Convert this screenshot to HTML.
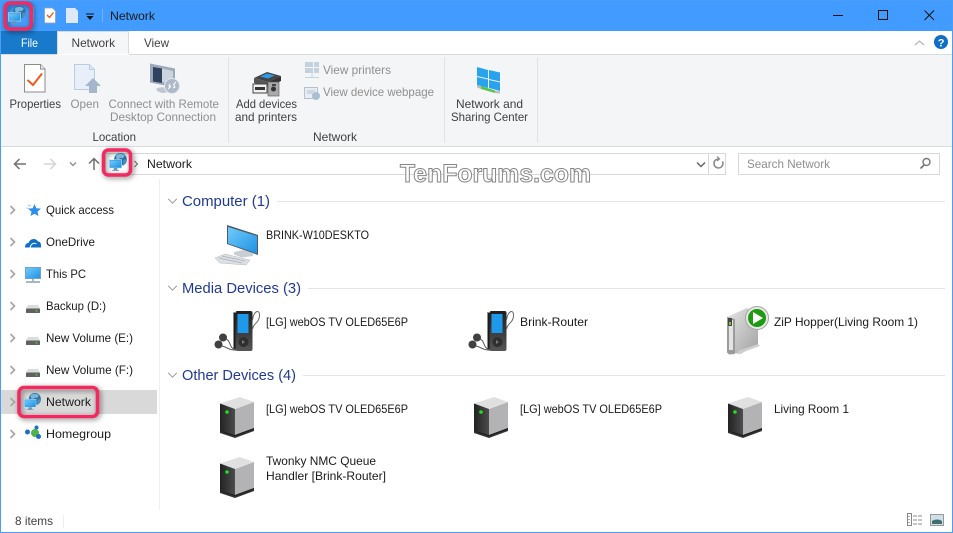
<!DOCTYPE html>
<html><head><meta charset="utf-8"><title>Network</title>
<style>
html,body{margin:0;padding:0;background:#fff;width:953px;height:533px;overflow:hidden}
svg{display:block}
text{font-family:"Liberation Sans",sans-serif;font-size:12px;fill:#1a1a1a}
.g{fill:#8f8f8f}.d{fill:#404040}.h{font-size:15px;fill:#203a94}
.wm{font-size:25px;font-weight:bold;fill:#fff;stroke:#858585;stroke-width:1px}
</style></head><body>
<svg width="953" height="533" viewBox="0 0 953 533" xmlns="http://www.w3.org/2000/svg">
<defs>
<filter id="sh" x="-40%" y="-40%" width="180%" height="180%"><feGaussianBlur stdDeviation="2.6"/></filter>
<linearGradient id="scr" x1="0" y1="0" x2="1" y2="1"><stop offset="0" stop-color="#74cbfa"/><stop offset="1" stop-color="#1c92e4"/></linearGradient>
<linearGradient id="tw" x1="0" y1="0" x2="1" y2="0"><stop offset="0" stop-color="#222"/><stop offset="1" stop-color="#4c4c4c"/></linearGradient>
<linearGradient id="rt" x1="0" y1="0" x2="1" y2="1"><stop offset="0" stop-color="#e6e6e6"/><stop offset="1" stop-color="#a2a2a2"/></linearGradient>
<linearGradient id="pl" x1="0" y1="0" x2="0" y2="1"><stop offset="0" stop-color="#1f1f1f"/><stop offset="1" stop-color="#555"/></linearGradient>
<symbol id="net" viewBox="0 0 24 24" overflow="visible">
<circle cx="14.500" cy="8" r="8" fill="#2e6f9e"/><path d="M9 3c3-2.500 8-2.500 11 .5l-3 3.500-2-1-3 2-3-1z" fill="#78b6dc"/><path d="M18 9l4.500-1.500c.5 4-1.500 7-5 8.500z" fill="#4a8fbd"/>
<rect x=".5" y="8.500" width="15.500" height="10.500" fill="#1f8fe4" stroke="#c5e6fa" stroke-width=".8"/>
<rect x="1.500" y="9.500" width="13.500" height="8.500" fill="url(#scr)"/>
<path d="M6.500 19.500h3.500v1.500H6.500zM4 22h8.500" fill="#5f8fae" stroke="#6f97b2" stroke-width="1"/>
</symbol>
<symbol id="tower" viewBox="0 0 34 41" overflow="visible">
<path d="M15 12L34 5v26l-19 7z" fill="#b3b3b5"/>
<path d="M0 6.500L20 0l14 5-19 7z" fill="#e0e0e0"/>
<path d="M0 6.500L15 12v26L0 33z" fill="url(#tw)"/>
<path d="M0 33l15 5 19-7v3l-19 7-15-5z" fill="#333"/>
<path d="M0 33l15 5 19-7v1.200l-19 7-15-5z" fill="#1d1d1d"/>
<circle cx="7" cy="15" r="1.800" fill="#1ee01e"/>
</symbol>
<symbol id="player" viewBox="0 0 46 46" overflow="visible">
<rect x="20.500" y="3" width="17" height="40" rx="2" fill="url(#pl)"/>
<path d="M20.500 5l-2-1v37l2 2z" fill="#1a1a1a"/>
<rect x="22.500" y="6" width="11" height="19" fill="#1f9aeb"/>
<circle cx="28.500" cy="34" r="5" fill="#2f2f2f"/><path d="M27 32l3 2-3 2z" fill="#777"/>
<path d="M37.500 12C39 2 45 1 44.500 8c-.5 7-6 7-7 13" fill="none" stroke="#666" stroke-width="1"/>
<path d="M10 31c6 0 4 10 10 10M7 38c5 1 6 4 13 4" fill="none" stroke="#555" stroke-width="1"/>
<circle cx="8" cy="29.500" r="4" fill="#404040"/><circle cx="3.500" cy="36.500" r="4" fill="#404040"/>
</symbol>
<symbol id="drive" viewBox="0 0 14 8" overflow="visible">
<path d="M2 0h10l2 3.500H0z" fill="#dcdcdc"/><rect y="3.500" width="14" height="4.500" rx=".8" fill="#606060"/><circle cx="10.500" cy="5.800" r="1" fill="#32d432"/>
</symbol>
<symbol id="chev" viewBox="0 0 8 10" overflow="visible"><path d="M1.500 1l4 4-4 4" fill="none" stroke="#a6a6a6" stroke-width="1.700"/></symbol>
<symbol id="dn" viewBox="0 0 12 7" overflow="visible"><path d="M1 1l5 5 5-5" fill="none" stroke="#8a8a8a" stroke-width="1"/></symbol>
</defs>

<rect width="953" height="533" fill="#fff"/>
<!-- title bar -->
<rect width="953" height="31" fill="#429cff"/>
<path d="M33.500 7v16" stroke="#6fb3fb"/>
<path d="M44.500 8h8l3 3v12h-11z" fill="#fdfdfd" stroke="#8aa3bd" stroke-width=".8"/><path d="M47 15l2.500 2.500 4-5" fill="none" stroke="#ea5a1f" stroke-width="1.400"/>
<path d="M66 8h9l3 3v12H66z" fill="#dfe8f6"/>
<path d="M86 14h8" stroke="#111" stroke-width="1"/><path d="M86.500 16h7l-3.500 4z" fill="#111"/>
<path d="M102.500 9v13" stroke="#6fb3fb"/>
<text x="110" y="20" textLength="45" lengthAdjust="spacingAndGlyphs">Network</text>
<path d="M833 15.500h10" stroke="#111" stroke-width="1"/>
<rect x="878.500" y="10.500" width="9" height="9" fill="none" stroke="#111"/>
<path d="M924.500 10.500l9.500 9.500M934 10.500L924.500 20" stroke="#111" fill="none"/>

<!-- tab row -->
<rect x="0" y="31" width="953" height="24" fill="#fff"/>
<rect x="1" y="31" width="56" height="24" fill="#1979ca"/>
<text x="21" y="47" textLength="17" lengthAdjust="spacingAndGlyphs" style="fill:#fff">File</text>
<path d="M57.500 54V31.500h71V54" fill="#f5f6f7" stroke="#dadbdc"/>
<text x="71.500" y="47" textLength="43.500" lengthAdjust="spacingAndGlyphs" class="d">Network</text>
<text x="144" y="47" textLength="25" lengthAdjust="spacingAndGlyphs" class="d">View</text>
<path d="M915 45l4.500-4 4.500 4" fill="none" stroke="#b5b5b5" stroke-width="1.200"/>
<circle cx="941" cy="42" r="7" fill="#0f6fc6"/><text x="937.800" y="46.500" style="font-size:11px;font-weight:bold;fill:#fff">?</text>

<!-- ribbon -->
<rect x="1" y="55" width="951" height="91" fill="#f4f5f7"/>
<path d="M129 54.500h824M0 54.500h57" stroke="#dadbdc"/>
<path d="M0 146.500h953" stroke="#dadbdc"/>
<path d="M228.500 57v86M444.500 57v86M537.500 57v86" stroke="#e1e2e4"/>

<!-- ribbon icons -->
<path d="M24.500 64.500h16l4.500 4.500v23h-20.500z" fill="#fff" stroke="#8c8c8c"/><path d="M40.500 64.500v4.500h4.500" fill="#eee" stroke="#8c8c8c"/>
<path d="M27.500 80l5.500 5 9-11.500" fill="none" stroke="#ed5b1e" stroke-width="2"/>
<path d="M74.500 64.500h15l5 5v20h-20z" fill="#e8eff9" stroke="#b9cbe5"/><path d="M89.500 64.500v5h5" fill="#dbe6f5" stroke="#b9cbe5"/>
<path d="M93 78l-8 8h4v7h8v-7h4z" fill="#a5b5cb"/>
<path d="M150 63.500l25 5v19l-25-5z" fill="#9ca9bb"/><path d="M153 67l9 1.500V83l-9-1.500z" fill="#2f4260"/><path d="M162 68.500l11 2.500v13l-11-2z" fill="#cbd3dd"/>
<path d="M156 89c4-3 12-2 12 1.500s-10 3.500-12-1.500z" fill="#c0c7d0"/>
<circle cx="172" cy="86" r="7.500" fill="#adb9c8" stroke="#e5e9ee"/><path d="M168 89l3-3M173 85l3-3M170 84l-1 2 2 1M173 88l2-1-1-2" fill="none" stroke="#fff"/>

<!-- add devices -->
<path d="M254 78l13-6 14 4-13 6z" fill="#444"/><path d="M260 76.500l7-3 8 2-7 3z" fill="#2f9be6"/>
<path d="M254 78l14 4v5l-14-4z" fill="#555"/><path d="M268 82l13-6v5l-13 6z" fill="#333"/>
<rect x="253" y="84" width="14" height="9" fill="#f1f1f1" stroke="#444"/><rect x="255" y="87" width="10" height="3" fill="#333"/>
<rect x="268" y="82" width="11" height="14" fill="#a9a9a9" stroke="#555" stroke-width=".6"/><circle cx="273.500" cy="89" r="2.500" fill="#333"/><rect x="272" y="84" width="4" height="2" fill="#444"/>

<!-- small grey ribbon icons -->
<g fill="#c4d1df"><rect x="305" y="62" width="8" height="5"/><rect x="314" y="62" width="5" height="5"/><rect x="305" y="68" width="8" height="5"/><rect x="314" y="68" width="5" height="5"/></g>
<path d="M312 73v4M305 77.500h14" stroke="#c4d1df"/>
<rect x="304.500" y="87.500" width="13" height="11" fill="#e8edf3" stroke="#b3c1d1"/><path d="M307 91h8M307 93h6" stroke="#b3c1d1"/>
<circle cx="316" cy="96" r="4" fill="#a9bdd3"/>

<!-- network and sharing -->
<path d="M477 67l11 3v8.500l-11-2.500z" fill="#2aa3ef"/><path d="M489 70l11 2.500v9l-11-2.500z" fill="#2aa3ef"/>
<path d="M477 77l11 2.500v8.500l-11-3z" fill="#2aa3ef"/><path d="M489 80l11 2.500v8.500l-11-3z" fill="#2aa3ef"/>
<path d="M481 86l14 4.500v2.500l-14-4z" fill="#5cc24a"/><path d="M495 90.500l5 1v2l-5-.5z" fill="#bbb"/><path d="M477 85l4 1v3l-4-1.500z" fill="#bbb"/>

<!-- ribbon text -->
<text x="9.500" y="108" textLength="51.500" lengthAdjust="spacingAndGlyphs" class="d">Properties</text>
<text x="70.500" y="108" textLength="28.500" lengthAdjust="spacingAndGlyphs" class="g">Open</text>
<text x="108.500" y="108" textLength="110.500" lengthAdjust="spacingAndGlyphs" class="g">Connect with Remote</text>
<text x="110" y="121" textLength="106" lengthAdjust="spacingAndGlyphs" class="g">Desktop Connection</text>
<text x="92.500" y="141" textLength="43.500" lengthAdjust="spacingAndGlyphs" class="d">Location</text>
<text x="236" y="108" textLength="61" lengthAdjust="spacingAndGlyphs" class="d">Add devices</text>
<text x="235" y="121" textLength="62" lengthAdjust="spacingAndGlyphs" class="d">and printers</text>
<text x="323" y="74" textLength="68" lengthAdjust="spacingAndGlyphs" class="g">View printers</text>
<text x="323" y="96" textLength="111" lengthAdjust="spacingAndGlyphs" class="g">View device webpage</text>
<text x="313" y="141" textLength="44" lengthAdjust="spacingAndGlyphs" class="d">Network</text>
<text x="456" y="108" textLength="67" lengthAdjust="spacingAndGlyphs" class="d">Network and</text>
<text x="451" y="121" textLength="77" lengthAdjust="spacingAndGlyphs" class="d">Sharing Center</text>

<!-- address row -->
<path d="M26 164H14.500M19.500 159l-5 5 5 5" fill="none" stroke="#707070" stroke-width="1.500"/>
<path d="M44 164h11.500M50.500 159l5 5-5 5" fill="none" stroke="#d5d5d5" stroke-width="1.500"/>
<path d="M70 162.500l3 3 3-3" fill="none" stroke="#8a8a8a" stroke-width="1.300"/>
<path d="M94 170v-11.500M89 163.500l5-5 5 5" fill="none" stroke="#707070" stroke-width="1.500"/>
<rect x="105.500" y="153.500" width="620" height="21" fill="#fff" stroke="#d9d9d9"/>
<path d="M708.500 154v20" stroke="#d9d9d9"/>
<path d="M697 162.500l4 4 4-4" fill="none" stroke="#666" stroke-width="1.500"/>
<path d="M722.500 161.500a4.500 4.500 0 1 1-3.500-2.500" fill="none" stroke="#888" stroke-width="1.500"/><path d="M717 156.500l2.500 2.500-2.500 2" fill="none" stroke="#888" stroke-width="1.200"/>
<path d="M134.500 161l3 3-3 3" fill="none" stroke="#777" stroke-width="1.200"/>
<text x="147" y="168" textLength="45" lengthAdjust="spacingAndGlyphs">Network</text>
<rect x="738.500" y="153.500" width="201" height="21" fill="#fff" stroke="#d9d9d9"/>
<text x="747" y="168" textLength="83" lengthAdjust="spacingAndGlyphs" class="g">Search Network</text>
<circle cx="926.500" cy="162" r="3.500" fill="none" stroke="#777" stroke-width="1.400"/><path d="M924 165l-3.500 3.500" stroke="#777" stroke-width="1.800"/>
<text x="400" y="182" textLength="191" lengthAdjust="spacingAndGlyphs" class="wm">TenForums.com</text>

<!-- sidebar -->
<path d="M159.500 179v331" stroke="#efefef"/>
<rect x="1" y="390" width="156" height="24" fill="#d9d9d9"/>
<use href="#chev" x="9" y="205" width="8" height="10"/>
<use href="#chev" x="9" y="237" width="8" height="10"/>
<use href="#chev" x="9" y="269" width="8" height="10"/>
<use href="#chev" x="9" y="301" width="8" height="10"/>
<use href="#chev" x="9" y="333" width="8" height="10"/>
<use href="#chev" x="9" y="365" width="8" height="10"/>
<use href="#chev" x="9" y="397" width="8" height="10"/>
<use href="#chev" x="9" y="429" width="8" height="10"/>
<path d="M34.500 204l1.800 4.200 4.700.4-3.500 3 1 4.400-4-2.300-4 2.300 1-4.400-3.500-3 4.700-.4z" fill="#2c8ee8"/>
<path d="M28 205l3 1M26.500 208l3 .5" stroke="#9dcaf2"/>
<path d="M25 247.500c0-3.500 2-4.500 3.500-4.500 1.500-4.500 7-5.500 9.500-1.500 2-.3 3.500 2 3 6z" fill="#0f6fc6"/>
<path d="M30 247.500c1-3 3-5.500 6.500-3.500" fill="none" stroke="#fff" stroke-width="1"/>
<rect x="25.500" y="267.500" width="15" height="11" fill="url(#scr)" stroke="#6ea3c8"/><path d="M33 279v2M26 282h14" stroke="#8a9fb0" stroke-width="1.500"/>
<use href="#drive" x="26" y="305" width="14" height="8"/>
<use href="#drive" x="26" y="337" width="14" height="8"/>
<use href="#drive" x="26" y="369" width="14" height="8"/>
<circle cx="27.500" cy="432" r="2.500" fill="#1d6fc4"/><circle cx="35" cy="433" r="4" fill="#4eb648"/><circle cx="36.500" cy="427.500" r="2" fill="#1d6fc4"/><circle cx="38.500" cy="436.500" r="2.500" fill="#1d6fc4"/>
<text x="46" y="214" textLength="68" lengthAdjust="spacingAndGlyphs">Quick access</text>
<text x="46" y="246" textLength="49" lengthAdjust="spacingAndGlyphs">OneDrive</text>
<text x="46" y="278" textLength="40" lengthAdjust="spacingAndGlyphs">This PC</text>
<text x="46" y="310" textLength="60" lengthAdjust="spacingAndGlyphs">Backup (D:)</text>
<text x="46" y="342" textLength="87" lengthAdjust="spacingAndGlyphs">New Volume (E:)</text>
<text x="46" y="374" textLength="87" lengthAdjust="spacingAndGlyphs">New Volume (F:)</text>
<text x="46" y="438" textLength="65" lengthAdjust="spacingAndGlyphs">Homegroup</text>

<!-- group headings -->
<use href="#dn" x="167" y="198" width="11" height="6"/>
<text x="182" y="206" textLength="88" lengthAdjust="spacingAndGlyphs" class="h">Computer (1)</text>
<path d="M277 201.500h668" stroke="#e5e5e5"/>
<use href="#dn" x="167" y="285" width="11" height="6"/>
<text x="182" y="293" textLength="119" lengthAdjust="spacingAndGlyphs" class="h">Media Devices (3)</text>
<path d="M308 288.500h637" stroke="#e5e5e5"/>
<use href="#dn" x="167" y="372" width="11" height="6"/>
<text x="182" y="380" textLength="114" lengthAdjust="spacingAndGlyphs" class="h">Other Devices (4)</text>
<path d="M303 375.500h642" stroke="#e5e5e5"/>

<!-- computer icon -->
<path d="M227 225l31 10v20l-31-11z" fill="#4a5a68"/>
<path d="M228 227l29 9v17.500l-29-10z" fill="url(#scr)"/>
<path d="M234 252l9-2 10 3 0 3-11 1.500-8-3z" fill="#c9ced3"/>
<path d="M215 258l10-4 25 6-4 5-26-2z" fill="#dcdfe3" stroke="#b5bbc1" stroke-width=".5"/>
<path d="M219 258l23 5M222 256l23 5" stroke="#aab0b6" stroke-width=".7"/>
<text x="266" y="239" textLength="103" lengthAdjust="spacingAndGlyphs">BRINK-W10DESKTO</text>

<!-- media devices -->
<use href="#player" x="215" y="308" width="46" height="46"/>
<text x="266" y="326" textLength="142" lengthAdjust="spacingAndGlyphs">[LG] webOS TV OLED65E6P</text>
<use href="#player" x="469" y="308" width="46" height="46"/>
<text x="520" y="326" textLength="68" lengthAdjust="spacingAndGlyphs">Brink-Router</text>
<!-- zip hopper -->
<path d="M727 317l20-9 11 8v29l-18 9-5-1z" fill="url(#rt)"/><path d="M727 317l8 2v35l-6 .5-2-2z" fill="#9b9b9b"/><path d="M729 320h4v30h-4z" fill="#e4e4e4"/>
<rect x="728" y="318" width="4" height="8" fill="#444"/><rect x="729" y="322" width="2" height="3" fill="#7ec92a"/>
<path d="M738 354l22-8-2-2-20 7z" fill="#cfcfcf"/>
<circle cx="757" cy="318" r="11.500" fill="#e8e8e8" stroke="#a5a5a5"/><circle cx="757" cy="318" r="9" fill="#1e9a10"/><path d="M753 312l10 6-10 6z" fill="#fff"/>
<text x="774" y="326" textLength="144" lengthAdjust="spacingAndGlyphs">ZiP Hopper(Living Room 1)</text>

<!-- other devices -->
<use href="#tower" x="220" y="397" width="34" height="41"/>
<text x="266" y="413" textLength="142" lengthAdjust="spacingAndGlyphs">[LG] webOS TV OLED65E6P</text>
<use href="#tower" x="474" y="397" width="34" height="41"/>
<text x="520" y="413" textLength="142" lengthAdjust="spacingAndGlyphs">[LG] webOS TV OLED65E6P</text>
<use href="#tower" x="728" y="397" width="34" height="41"/>
<text x="774" y="413" textLength="75" lengthAdjust="spacingAndGlyphs">Living Room 1</text>
<use href="#tower" x="220" y="457" width="34" height="41"/>
<text x="266" y="465" textLength="110" lengthAdjust="spacingAndGlyphs">Twonky NMC Queue</text>
<text x="266" y="480" textLength="120" lengthAdjust="spacingAndGlyphs">Handler [Brink-Router]</text>

<!-- status -->
<text x="15" y="525" textLength="38" lengthAdjust="spacingAndGlyphs" class="d">8 items</text>
<path d="M63.500 515v13" stroke="#eee"/>
<rect x="907.500" y="513.500" width="4" height="12" fill="#fff" stroke="#888"/><path d="M909 516v1M909 519v1M909 522v1" stroke="#555"/><path d="M913 516h10M913 520h10M913 524h10" stroke="#888" stroke-dasharray="4 1"/>
<rect x="930.500" y="514.500" width="13" height="11" fill="#cfe0ea" stroke="#999"/><path d="M932 521c3-2 7-2 10 0v3h-10z" fill="#3f6f70"/>

<!-- pink highlights -->
<g fill="none" stroke="#000" stroke-opacity=".5" stroke-width="3.500" filter="url(#sh)">
<rect x="6.500" y="4.500" width="26" height="26" rx="5"/><rect x="105" y="151.500" width="27" height="25" rx="5"/><rect x="20.500" y="389" width="78.500" height="29" rx="5"/>
</g>
<use href="#net" x="8" y="6" width="19" height="19"/>
<use href="#net" x="109" y="153" width="19" height="19"/>
<use href="#net" x="24" y="393" width="18" height="18"/>
<text x="46" y="406" textLength="45" lengthAdjust="spacingAndGlyphs">Network</text>
<g fill="none" stroke="#f3295f" stroke-width="3.500">
<rect x="5.200" y="3" width="26" height="26" rx="5"/><rect x="103.500" y="150" width="27" height="25" rx="5"/><rect x="19" y="387.500" width="78.500" height="29" rx="5"/>
</g>

<!-- window border -->
<rect x=".5" y=".5" width="952" height="532" fill="none" stroke="#4a9ff5"/>
</svg>
</body></html>
